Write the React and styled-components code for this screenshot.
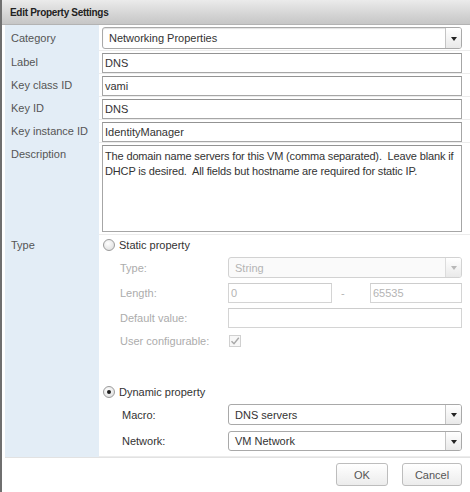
import React from "react";
import styled, { createGlobalStyle } from "styled-components";

const Global = createGlobalStyle`
  html, body { margin: 0; padding: 0; background: #fff; }
  body { font-family: "Liberation Sans", Arial, sans-serif; font-size: 11px; color: #333; }
  * { box-sizing: border-box; }
`;

const Window = styled.div`
  width: 470px;
  height: 492px;
  display: flex;
  flex-direction: column;
  border-left: 2px solid #6f6f6f;
  background: #fff;
  overflow: hidden;
`;

const TitleBar = styled.div`
  height: 25px;
  flex: none;
  display: flex;
  align-items: center;
  padding-left: 8px;
  background: linear-gradient(#ebebeb, #d6d6d6 55%, #c6c6c6);
  border-bottom: 1px solid #b3b3b3;
  font-weight: bold;
  font-size: 10px;
  letter-spacing: -0.3px;
  color: #222;
`;

const Body = styled.div`
  flex: 1;
  display: flex;
  flex-direction: column;
  padding-left: 3px;
`;

const Form = styled.div`
  flex: 1;
  display: flex;
  flex-direction: column;
`;

const Row = styled.div`
  display: grid;
  grid-template-columns: 94px 1fr;
  flex: ${(p) => (p.$grow ? 1 : "none")};
`;

const LabelCell = styled.div`
  background: #e3edf6;
  padding-left: 6px;
  color: #555;
  font-size: 11px;
  line-height: 13px;
  display: flex;
  align-items: ${(p) => (p.$top ? "flex-start" : "center")};
  padding-top: ${(p) => p.$pt || 0}px;
`;

const FieldCell = styled.div`
  padding: ${(p) => p.$pad || "2px 8px 0 3px"};
  border-bottom: 1px solid #ececec;
  display: flex;
  flex-direction: column;
`;

const TextInput = styled.div`
  height: ${(p) => p.$h || 20}px;
  flex: none;
  border: 1px solid ${(p) => (p.$disabled ? "#d4d4d4" : "#a6a6a6")};
  border-top-color: ${(p) => (p.$disabled ? "#cdcdcd" : "#939393")};
  padding: 0 2px;
  display: flex;
  align-items: center;
  font-size: 11px;
  color: ${(p) => (p.$disabled ? "#b4b4b4" : "#333")};
  background: #fff;
  width: ${(p) => (p.$w ? p.$w + "px" : "auto")};
  white-space: nowrap;
`;

const TextArea = styled.div`
  height: 87px;
  flex: none;
  border: 1px solid #a6a6a6;
  border-top-color: #939393;
  padding: 3px 2px;
  font-size: 11px;
  line-height: 15px;
  letter-spacing: -0.15px;
  color: #333;
  white-space: pre;
  overflow: hidden;
`;

const SelectBox = styled.div`
  height: ${(p) => p.$h || 21}px;
  flex: none;
  display: flex;
  border: 1px solid ${(p) => (p.$disabled ? "#d2d2d2" : "#a9a9a9")};
  border-radius: 3px;
  background: ${(p) => (p.$disabled ? "#fafafa" : "#fff")};
  box-shadow: ${(p) => (p.$inset ? "inset 0 1px 1px rgba(0,0,0,0.12)" : "none")};
  overflow: hidden;
`;

const SelectValue = styled.div`
  flex: 1;
  padding-left: 6px;
  display: flex;
  align-items: center;
  font-size: 11px;
  color: ${(p) => (p.$disabled ? "#b4b4b4" : "#333")};
`;

const SelectArrow = styled.div`
  width: 16px;
  flex: none;
  border-left: 1px solid ${(p) => (p.$disabled ? "#dcdcdc" : "#c4c4c4")};
  background: linear-gradient(#ffffff, #e9e9e9);
  display: flex;
  align-items: center;
  justify-content: center;
  &::after {
    content: "";
    border-left: 3px solid transparent;
    border-right: 3px solid transparent;
    border-top: 4px solid ${(p) => (p.$disabled ? "#b8b8b8" : "#222")};
    margin-top: 1px;
  }
`;

const RadioLine = styled.div`
  display: flex;
  align-items: center;
  gap: 4px;
  height: 12px;
  padding-left: 1px;
  margin-top: ${(p) => p.$mt || 0}px;
  font-size: 11px;
  color: #333;
  line-height: 13px;
`;

const Radio = styled.span`
  width: 12px;
  height: 12px;
  flex: none;
  border-radius: 50%;
  border: 1px solid #9b9b9b;
  background: radial-gradient(circle at 40% 35%, #ffffff, #e4e4e4 70%, #d2d2d2);
  display: flex;
  align-items: center;
  justify-content: center;
  &::after {
    content: "";
    display: ${(p) => (p.$checked ? "block" : "none")};
    width: 4px;
    height: 4px;
    border-radius: 50%;
    background: #1e1e1e;
  }
`;

const SubGrid = styled.div`
  display: grid;
  grid-template-columns: 108px 1fr;
  row-gap: ${(p) => p.$gap}px;
  margin-top: 6px;
  padding-left: 18px;
`;

const SubLabel = styled.div`
  display: flex;
  align-items: center;
  font-size: 11px;
  color: ${(p) => (p.$disabled ? "#acacac" : "#333")};
  padding-left: ${(p) => p.$pl || 0}px;
`;

const RangeLine = styled.div`
  display: flex;
  align-items: center;
`;

const Dash = styled.span`
  color: #b4b4b4;
  margin-left: 9px;
  margin-right: auto;
`;

const CheckBox = styled.span`
  width: 12px;
  height: 12px;
  margin-left: 1px;
  border: 1px solid #d0d0d0;
  background: #f7f7f7;
  display: flex;
  align-items: center;
  justify-content: center;
`;

const CheckCell = styled.div`
  height: 16px;
  display: flex;
  align-items: center;
`;

const Footer = styled.div`
  height: 35px;
  flex: none;
  border-top: 1px solid #e2e2e2;
  display: flex;
  justify-content: flex-end;
  align-items: flex-start;
  gap: 14px;
  padding: 5px 8px 0 0;
`;

const Button = styled.button`
  width: ${(p) => p.$w}px;
  height: 23px;
  border: 1px solid #bdbdbd;
  border-radius: 3px;
  background: linear-gradient(#ffffff, #ececec);
  font-family: "Liberation Sans", Arial, sans-serif;
  font-size: 11px;
  color: #555;
  padding: 0;
`;

function Select({ value, disabled, h, inset }) {
  return (
    <SelectBox $disabled={disabled} $h={h} $inset={inset}>
      <SelectValue $disabled={disabled}>{value}</SelectValue>
      <SelectArrow $disabled={disabled} />
    </SelectBox>
  );
}

export default function App() {
  return (
    <>
      <Global />
      <Window>
        <TitleBar>Edit Property Settings</TitleBar>
        <Body>
          <Form>
            <Row>
              <LabelCell>Category</LabelCell>
              <FieldCell $pad="2px 8px 1px 3px">
                <Select value="Networking Properties" h={22} inset />
              </FieldCell>
            </Row>
            <Row>
              <LabelCell>Label</LabelCell>
              <FieldCell>
                <TextInput>DNS</TextInput>
              </FieldCell>
            </Row>
            <Row>
              <LabelCell>Key class ID</LabelCell>
              <FieldCell>
                <TextInput>vami</TextInput>
              </FieldCell>
            </Row>
            <Row>
              <LabelCell>Key ID</LabelCell>
              <FieldCell>
                <TextInput>DNS</TextInput>
              </FieldCell>
            </Row>
            <Row>
              <LabelCell>Key instance ID</LabelCell>
              <FieldCell>
                <TextInput>IdentityManager</TextInput>
              </FieldCell>
            </Row>
            <Row>
              <LabelCell $top $pt={5}>Description</LabelCell>
              <FieldCell $pad="2px 8px 2px 3px">
                <TextArea>
                  {"The domain name servers for this VM (comma separated).  Leave blank if\nDHCP is desired.  All fields but hostname are required for static IP."}
                </TextArea>
              </FieldCell>
            </Row>
            <Row $grow>
              <LabelCell $top $pt={4}>Type</LabelCell>
              <FieldCell $pad="4px 8px 0 3px">
                <RadioLine>
                  <Radio />
                  Static property
                </RadioLine>
                <SubGrid $gap={5}>
                  <SubLabel $disabled>Type:</SubLabel>
                  <Select value="String" disabled h={21} />
                  <SubLabel $disabled>Length:</SubLabel>
                  <RangeLine>
                    <TextInput $disabled $w={104}>0</TextInput>
                    <Dash>-</Dash>
                    <TextInput $disabled $w={92}>65535</TextInput>
                  </RangeLine>
                  <SubLabel $disabled>Default value:</SubLabel>
                  <TextInput $disabled />
                  <SubLabel $disabled>User configurable:</SubLabel>
                  <CheckCell>
                    <CheckBox>
                      <svg width="10" height="10" viewBox="0 0 10 10">
                        <path d="M1.5 5.2 L4 7.8 L8.8 1.8" fill="none" stroke="#a8a8a8" strokeWidth="1.4" />
                      </svg>
                    </CheckBox>
                  </CheckCell>
                </SubGrid>
                <RadioLine $mt={37}>
                  <Radio $checked />
                  Dynamic property
                </RadioLine>
                <SubGrid $gap={6}>
                  <SubLabel $pl={2}>Macro:</SubLabel>
                  <Select value="DNS servers" h={21} />
                  <SubLabel $pl={2}>Network:</SubLabel>
                  <Select value="VM Network" h={20} />
                </SubGrid>
              </FieldCell>
            </Row>
          </Form>
          <Footer>
            <Button $w={52}>OK</Button>
            <Button $w={60}>Cancel</Button>
          </Footer>
        </Body>
      </Window>
    </>
  );
}
